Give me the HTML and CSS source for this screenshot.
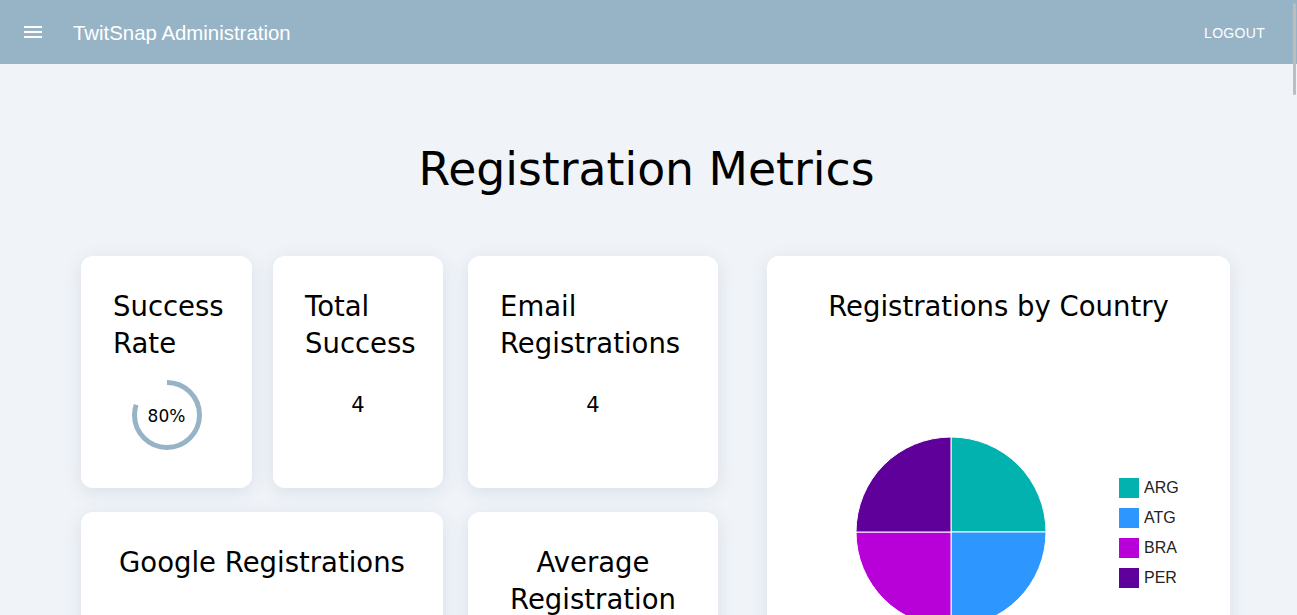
FILE: index.html
```html
<!DOCTYPE html>
<html lang="en">
<head>
<meta charset="utf-8">
<title>TwitSnap Administration</title>
<link rel="stylesheet" href="styles.css">
</head>
<body>
<header class="appbar">
  <button class="menu-btn" aria-label="menu">
    <svg width="24" height="24" viewBox="0 0 24 24"><path d="M3 18h18v-2H3zm0-5h18v-2H3zm0-7v2h18V6z" fill="#fff"/></svg>
  </button>
  <div class="app-title">TwitSnap Administration</div>
  <div class="spacer"></div>
  <button class="logout">LOGOUT</button>
</header>
<main class="page">
  <h1 class="page-title">Registration Metrics</h1>
  <div class="layout">
    <div class="metrics">
      <div class="pair">
        <section class="card card-sm">
          <h2 class="card-title">Success Rate</h2>
          <div class="rate">
            <svg class="ring" width="70" height="70" viewBox="0 0 70 70">
              <circle cx="35" cy="35" r="32.5" fill="none" stroke="#97b4c7" stroke-width="5"
                stroke-dasharray="163.4 204.2" transform="rotate(-90 35 35)"/>
            </svg>
            <span class="rate-label">80%</span>
          </div>
        </section>
        <section class="card card-sm">
          <h2 class="card-title">Total Success</h2>
          <div class="value">4</div>
        </section>
      </div>
      <section class="card">
        <h2 class="card-title">Email Registrations</h2>
        <div class="value">4</div>
      </section>
      <section class="card card-center">
        <h2 class="card-title">Google Registrations</h2>
        <div class="value">2</div>
      </section>
      <section class="card card-center">
        <h2 class="card-title">Average Registration Time</h2>
        <div class="value">3s</div>
      </section>
    </div>
    <section class="card chart-card">
      <h2 class="card-title centered">Registrations by Country</h2>
      <div class="chart">
        <svg class="pie" width="192" height="192" viewBox="-96 -96 192 192">
          <path d="M0 0 L0 -95 A95 95 0 0 1 95 0 Z" fill="#02B2AF" stroke="#fff" stroke-width="1"/>
          <path d="M0 0 L95 0 A95 95 0 0 1 0 95 Z" fill="#2E96FF" stroke="#fff" stroke-width="1"/>
          <path d="M0 0 L0 95 A95 95 0 0 1 -95 0 Z" fill="#B800D8" stroke="#fff" stroke-width="1"/>
          <path d="M0 0 L-95 0 A95 95 0 0 1 0 -95 Z" fill="#60009B" stroke="#fff" stroke-width="1"/>
        </svg>
        <ul class="legend">
          <li><span class="swatch sw-arg"></span>ARG</li>
          <li><span class="swatch sw-atg"></span>ATG</li>
          <li><span class="swatch sw-bra"></span>BRA</li>
          <li><span class="swatch sw-per"></span>PER</li>
        </ul>
      </div>
    </section>
  </div>
</main>
<div class="scroll-thumb"></div>
</body>
</html>
```
FILE: styles.css
```css
html, body {
  margin: 0;
  padding: 0;
  height: 100%;
  overflow: hidden;
}
body {
  background: #f0f4f9;
  font-family: "DejaVu Sans", "Noto Sans", sans-serif;
  color: #000;
}
.appbar {
  height: 64px;
  background: #97b4c7;
  display: flex;
  align-items: center;
  padding: 0 24px 0 12px;
  box-sizing: border-box;
}
.menu-btn {
  background: none;
  border: 0;
  padding: 9px;
  margin-right: 19px;
  display: flex;
  cursor: pointer;
}
.app-title {
  font-family: "Liberation Sans", Arial, sans-serif;
  font-size: 20.4px;
  color: #fff;
  padding-top: 2px;
}
.spacer { flex: 1; }
.logout {
  background: none;
  border: 0;
  color: #fff;
  font-family: "Liberation Sans", Arial, sans-serif;
  font-size: 14px;
  letter-spacing: 0.3px;
  padding: 7px 8px 6px;
}
.page {
  padding: 0 67px 0 81px;
}
.page-title {
  margin: 0;
  padding: 78px 0 58px;
  text-align: center;
  font-size: 45.7px;
  font-weight: 400;
  line-height: 56px;
  letter-spacing: 0;
  transform: translateX(-9px);
}
.layout {
  display: grid;
  grid-template-columns: 637px 463px;
  column-gap: 49px;
  align-items: start;
}
.metrics {
  display: grid;
  grid-template-columns: 362px 250px;
  column-gap: 25px;
  row-gap: 24px;
}
.pair {
  display: grid;
  grid-template-columns: 171px 170px;
  column-gap: 21px;
}
.card {
  background: #fff;
  border-radius: 12px;
  box-shadow: 0 4px 18px rgba(60, 80, 110, 0.12);
  padding: 32px;
  box-sizing: border-box;
  height: 232px;
  display: flex;
  flex-direction: column;
}
.card-title {
  margin: 0;
  font-size: 27.5px;
  font-weight: 400;
  line-height: 37px;
}
.card-center .card-title,
.centered {
  text-align: center;
}
.value {
  text-align: center;
  font-size: 21px;
  line-height: 34px;
  margin-top: 26px;
}
.rate {
  position: relative;
  width: 70px;
  height: 70px;
  margin: 18px auto 0;
  display: flex;
  align-items: center;
  justify-content: center;
}
.ring {
  position: absolute;
  left: 0;
  top: 0;
}
.rate-label {
  font-size: 17px;
  position: relative;
  top: 1px;
}
.chart-card {
  height: 520px;
}
.chart {
  flex: none;
  display: flex;
  align-items: center;
  height: 300px;
  margin-top: 57px;
  padding-left: 56px;
}
.pie {
  display: block;
  flex: none;
}
.legend {
  list-style: none;
  margin: 2px 0 0 72px;
  padding: 0;
  display: flex;
  flex-direction: column;
  gap: 10px;
  font-family: "Liberation Sans", Arial, sans-serif;
  font-size: 16px;
  color: #222;
}
.legend li {
  display: flex;
  align-items: center;
  height: 20px;
  gap: 5px;
}
.swatch {
  width: 20px;
  height: 20px;
  display: inline-block;
}
.sw-arg { background: #02B2AF; }
.sw-atg { background: #2E96FF; }
.sw-bra { background: #B800D8; }
.sw-per { background: #60009B; }
.scroll-thumb {
  position: fixed;
  right: 1px;
  top: 3px;
  width: 3px;
  height: 92px;
  background: #bdbdbd;
  border-radius: 2px;
}
```
